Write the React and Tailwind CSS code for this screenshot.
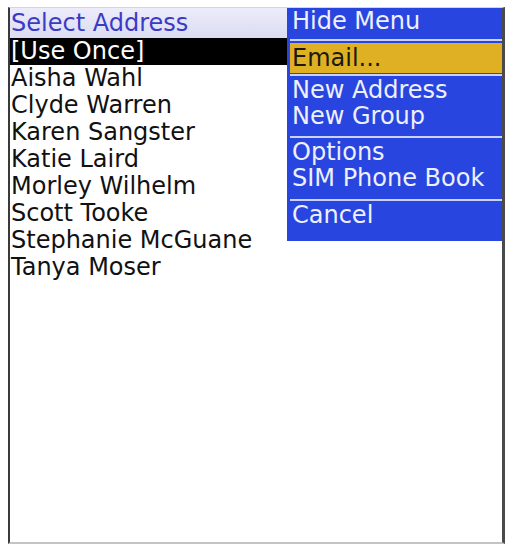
import React from 'react';

const contacts = [
    'Aisha Wahl',
    'Clyde Warren',
    'Karen Sangster',
    'Katie Laird',
    'Morley Wilhelm',
    'Scott Tooke',
    'Stephanie McGuane',
    'Tanya Moser',
];

const Separator = () => <div className="h-[2px] bg-[#c9d3ff]" />;

const App = () => {
    return (
        <div className="w-[506px] h-[545px] bg-white pt-[7px] pl-[8px] pr-[1px] pb-[1px]">
            <div
                className="relative h-full overflow-hidden border-l-2 border-r-[3px] border-l-[#3a3a3a] border-r-[#4a4a4a] border-t border-t-[#d6d6d6] border-b-2 border-b-[#c4c4c4] text-[24px]"
                style={{ fontFamily: '"DejaVu Sans", "Liberation Sans", sans-serif' }}
            >
                {/* Screen title */}
                <div className="h-[30px] leading-[30px] pl-[1px] bg-gradient-to-b from-[#ececfb] to-[#dcdcf2] text-[#3b3bc6] whitespace-nowrap">
                    Select Address
                </div>

                {/* Address list */}
                <div className="h-[27px] leading-[27px] pl-[1px] bg-black text-white whitespace-nowrap">
                    [Use Once]
                </div>
                {contacts.map((name) => (
                    <div key={name} className="h-[27px] leading-[27px] pl-[1px] text-[#111] whitespace-nowrap">
                        {name}
                    </div>
                ))}

                {/* Popup menu */}
                <div className="absolute left-[277px] top-0 right-0 h-[233px] bg-[#2945df] pl-[3px] text-[#eef0ff] whitespace-nowrap">
                    <div className="h-[31px] leading-[27px] pl-[2px]">Hide Menu</div>
                    <Separator />
                    <div className="mt-[2px] h-[30px] leading-[30px] pl-[2px] bg-[#dfb024] text-[#1c1a10]">Email...</div>
                    <div className="mt-[1px]">
                        <Separator />
                    </div>
                    <div className="pt-[1px] pb-[7px] pl-[2px] leading-[26px]">
                        <div>New Address</div>
                        <div>New Group</div>
                    </div>
                    <Separator />
                    <div className="pt-[1px] pb-[8px] pl-[2px] leading-[26px]">
                        <div>Options</div>
                        <div>SIM Phone Book</div>
                    </div>
                    <Separator />
                    <div className="pt-[1px] pl-[2px] leading-[27px]">Cancel</div>
                </div>
            </div>
        </div>
    );
};

export default App;
